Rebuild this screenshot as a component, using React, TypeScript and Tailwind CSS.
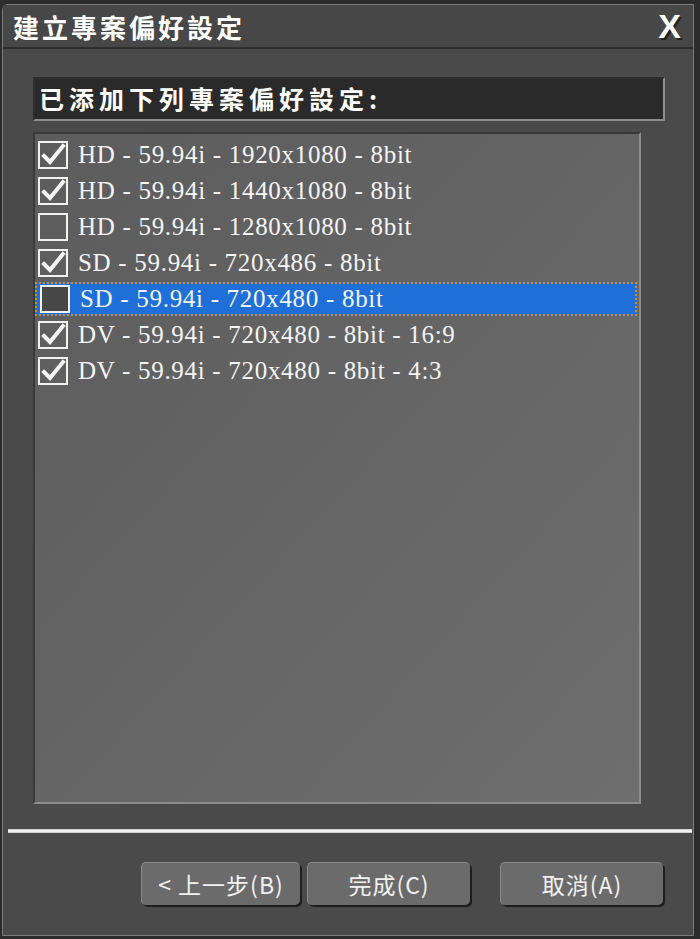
import React from "react";

const cjk = "font-['Noto_Sans_CJK_TC',sans-serif]";
const latin = "font-['Liberation_Serif','Noto_Sans_CJK_TC',serif]";

const presets = [
  { label: "HD - 59.94i - 1920x1080 - 8bit", checked: true },
  { label: "HD - 59.94i - 1440x1080 - 8bit", checked: true },
  { label: "HD - 59.94i - 1280x1080 - 8bit", checked: false },
  { label: "SD - 59.94i - 720x486 - 8bit", checked: true },
  { label: "SD - 59.94i - 720x480 - 8bit", checked: false, selected: true },
  { label: "DV - 59.94i - 720x480 - 8bit - 16:9", checked: true },
  { label: "DV - 59.94i - 720x480 - 8bit - 4:3", checked: true },
];

function CheckBox({ checked, selected }: { checked: boolean; selected?: boolean }) {
  return (
    <div
      className={`relative h-[28px] w-[30px] shrink-0 border-2 border-[#f2f2f2] ${
        selected ? "bg-[#474747]" : ""
      }`}
    >
      {checked ? (
        <svg viewBox="0 0 30 28" className="absolute -left-[2px] -top-[2px] h-[28px] w-[30px] overflow-visible">
          <path
            d="M6 15 L12 21 L25 5"
            fill="none"
            stroke="#f4f4f4"
            strokeWidth="4"
            strokeLinecap="square"
          />
        </svg>
      ) : null}
    </div>
  );
}

function Button({ children }: { children: React.ReactNode }) {
  return (
    <button
      type="button"
      className={`h-[43px] w-[163px] rounded-[5px] border-t border-l border-[#8a8a8a] bg-[#6b6b6b] text-[23px] tracking-[1px] text-[#f2f2f2] shadow-[2px_2px_0_#1e1e1e] ${cjk}`}
    >
      {children}
    </button>
  );
}

export default function App() {
  return (
    <div className="h-[939px] w-[700px] bg-[#2c2c2c] pb-[3px] pl-[2px] pr-[6px] pt-[4px]">
      <div className="flex h-full flex-col rounded-tl-[6px] border border-[#7c7c7c] bg-[#4a4a4a]">
        <div className="flex h-[44px] items-center justify-between border-b-2 border-[#2e2e2e] bg-[#474747] pl-[10px] pr-[12px]">
          <h1 className={`text-[26px] font-bold tracking-[3px] text-white ${cjk}`}>建立專案偏好設定</h1>
          <span className="text-[34px] font-bold leading-none text-white font-['Liberation_Sans',sans-serif] [text-shadow:2px_2px_0_#222]">
            X
          </span>
        </div>

        <div className="flex flex-1 flex-col px-[30px] pt-[28px]">
          <div className="flex h-[44px] w-[632px] items-center border-2 border-b-[#8e8e8e] border-l-[#2f2f2f] border-r-[#8e8e8e] border-t-[#2f2f2f] bg-[#2a2a2a] px-[4px]">
            <span className={`text-[25px] font-bold tracking-[5px] text-white ${cjk}`}>已添加下列專案偏好設定:</span>
          </div>

          <div className="mt-[11px] h-[672px] w-[608px] border-2 border-b-[#8c8c8c] border-l-[#393939] border-r-[#8c8c8c] border-t-[#393939] bg-gradient-to-br from-[#5c5c5c] to-[#6e6e6e] pt-[3px]">
            {presets.map((p) => (
              <div key={p.label} className="flex h-[36px] items-center">
                <div
                  className={`flex h-[34px] w-[602px] items-center gap-[10px] pl-[3px] ${
                    p.selected ? "border-2 border-dotted border-[#e08a1e] bg-[#1f6fd8] pl-[1px]" : ""
                  }`}
                >
                  <CheckBox checked={p.checked} selected={p.selected} />
                  <span className={`whitespace-nowrap text-[25px] tracking-[0.7px] text-[#f4f4f4] ${latin}`}>
                    {p.label}
                  </span>
                </div>
              </div>
            ))}
          </div>

          <div className="mt-[25px] h-[4px] w-[684px] -ml-[25px] border-y border-[#cfcfcf] bg-[#f0f0f0]" />

          <div className="mt-[29px] flex items-center pl-[108px]">
            <Button>&lt; 上一步(B)</Button>
            <div className="ml-[7px]">
              <Button>完成(C)</Button>
            </div>
            <div className="ml-[30px]">
              <Button>取消(A)</Button>
            </div>
          </div>
        </div>
      </div>
    </div>
  );
}
